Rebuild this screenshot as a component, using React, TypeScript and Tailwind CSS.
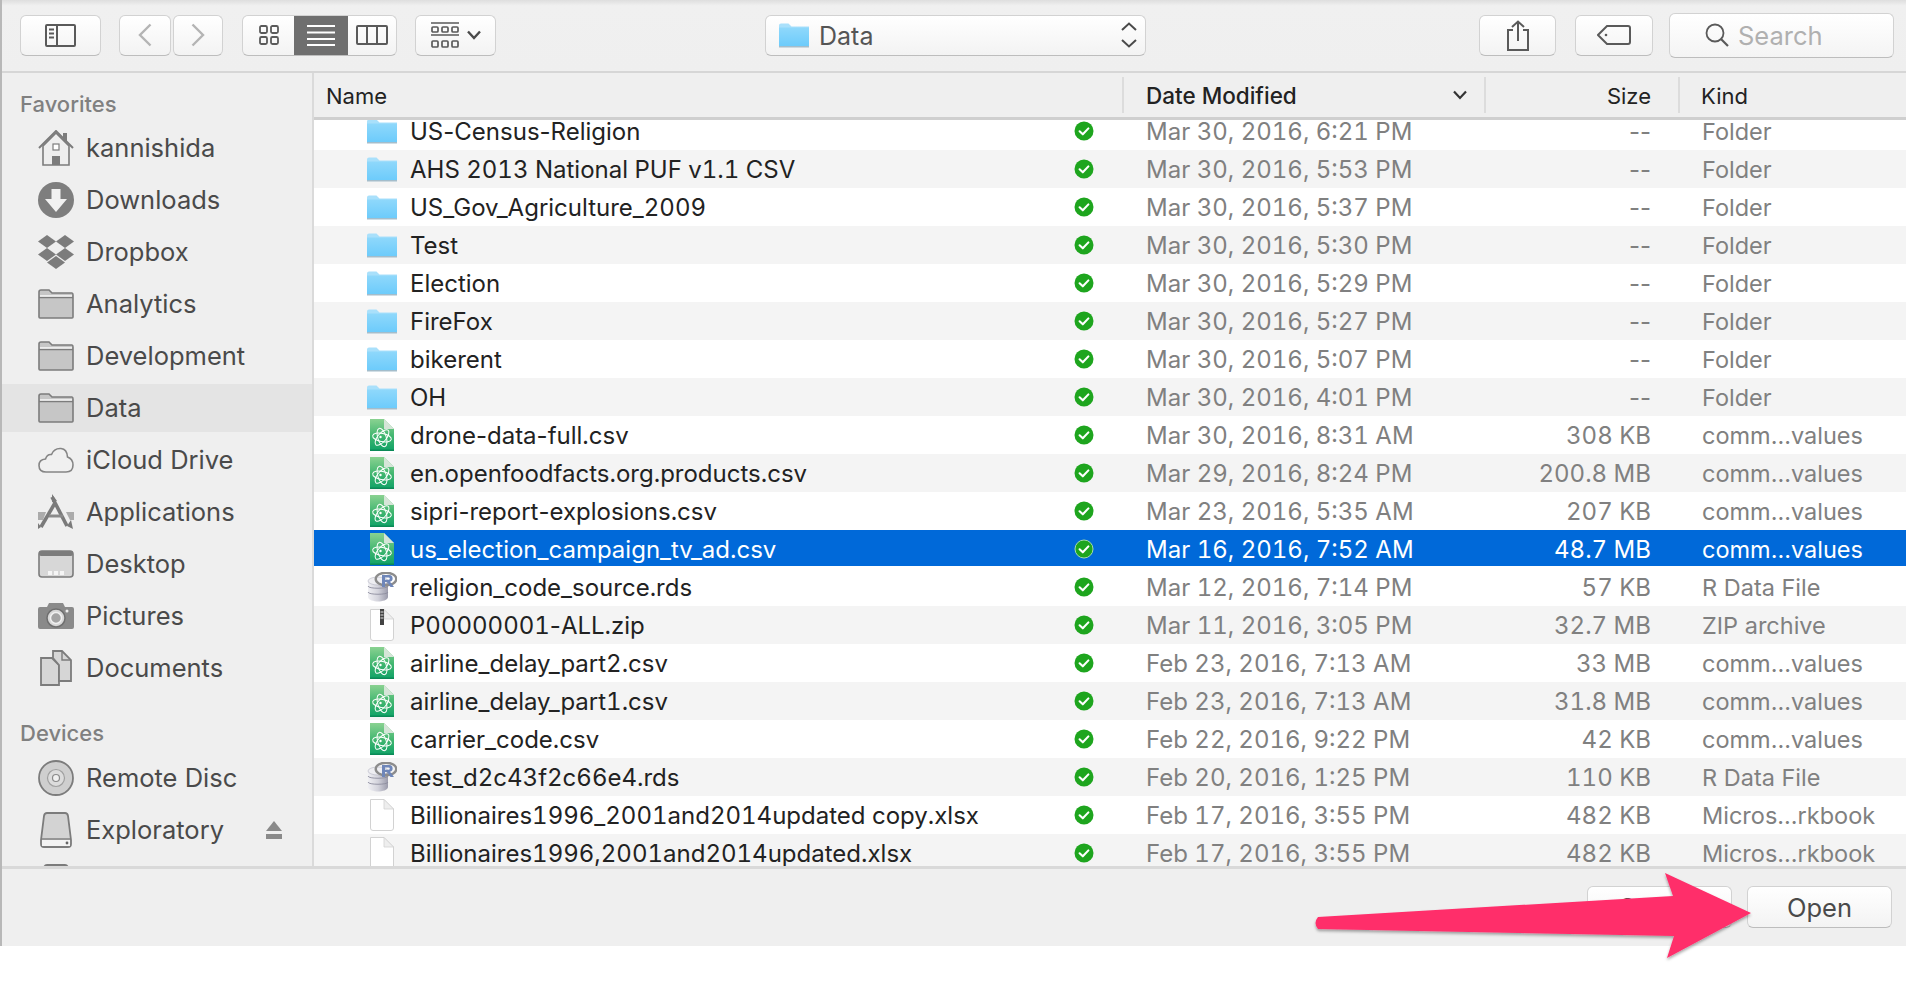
import React from "react";

type Row = { n: string; d: string; s: string; k: string; t: "folder" | "csv" | "rds" | "zip" | "blank" };

const rows: Row[] = [
  { n: "US-Census-Religion", d: "Mar 30, 2016, 6:21 PM", s: "--", k: "Folder", t: "folder" },
  { n: "AHS 2013 National PUF v1.1 CSV", d: "Mar 30, 2016, 5:53 PM", s: "--", k: "Folder", t: "folder" },
  { n: "US_Gov_Agriculture_2009", d: "Mar 30, 2016, 5:37 PM", s: "--", k: "Folder", t: "folder" },
  { n: "Test", d: "Mar 30, 2016, 5:30 PM", s: "--", k: "Folder", t: "folder" },
  { n: "Election", d: "Mar 30, 2016, 5:29 PM", s: "--", k: "Folder", t: "folder" },
  { n: "FireFox", d: "Mar 30, 2016, 5:27 PM", s: "--", k: "Folder", t: "folder" },
  { n: "bikerent", d: "Mar 30, 2016, 5:07 PM", s: "--", k: "Folder", t: "folder" },
  { n: "OH", d: "Mar 30, 2016, 4:01 PM", s: "--", k: "Folder", t: "folder" },
  { n: "drone-data-full.csv", d: "Mar 30, 2016, 8:31 AM", s: "308 KB", k: "comm...values", t: "csv" },
  { n: "en.openfoodfacts.org.products.csv", d: "Mar 29, 2016, 8:24 PM", s: "200.8 MB", k: "comm...values", t: "csv" },
  { n: "sipri-report-explosions.csv", d: "Mar 23, 2016, 5:35 AM", s: "207 KB", k: "comm...values", t: "csv" },
  { n: "us_election_campaign_tv_ad.csv", d: "Mar 16, 2016, 7:52 AM", s: "48.7 MB", k: "comm...values", t: "csv" },
  { n: "religion_code_source.rds", d: "Mar 12, 2016, 7:14 PM", s: "57 KB", k: "R Data File", t: "rds" },
  { n: "P00000001-ALL.zip", d: "Mar 11, 2016, 3:05 PM", s: "32.7 MB", k: "ZIP archive", t: "zip" },
  { n: "airline_delay_part2.csv", d: "Feb 23, 2016, 7:13 AM", s: "33 MB", k: "comm...values", t: "csv" },
  { n: "airline_delay_part1.csv", d: "Feb 23, 2016, 7:13 AM", s: "31.8 MB", k: "comm...values", t: "csv" },
  { n: "carrier_code.csv", d: "Feb 22, 2016, 9:22 PM", s: "42 KB", k: "comm...values", t: "csv" },
  { n: "test_d2c43f2c66e4.rds", d: "Feb 20, 2016, 1:25 PM", s: "110 KB", k: "R Data File", t: "rds" },
  { n: "Billionaires1996_2001and2014updated copy.xlsx", d: "Feb 17, 2016, 3:55 PM", s: "482 KB", k: "Micros...rkbook", t: "blank" },
  { n: "Billionaires1996,2001and2014updated.xlsx", d: "Feb 17, 2016, 3:55 PM", s: "482 KB", k: "Micros...rkbook", t: "blank" },
];

function BlueFolder({ w = 30, h = 25 }: { w?: number; h?: number }) {
  return (
    <svg width={w} height={h} viewBox="0 0 30 25">
      <defs>
        <linearGradient id="bf" x1="0" y1="0" x2="0" y2="1">
          <stop offset="0" stopColor="#8fd8fb" />
          <stop offset="1" stopColor="#6ccbfb" />
        </linearGradient>
      </defs>
      <path d="M0 2.5Q0 0.5 2 0.5H9.5L12.5 3.5H30V23H0Z" fill="#a9e0fb" />
      <rect x="0" y="4.5" width="30" height="19" fill="url(#bf)" />
      <rect x="0" y="23" width="30" height="1.5" fill="#a4bdcb" />
    </svg>
  );
}

function CsvIcon() {
  return (
    <svg width="24" height="32" viewBox="0 0 24 32">
      <defs>
        <linearGradient id="cg" x1="0" y1="0" x2="0" y2="1">
          <stop offset="0" stopColor="#8ad291" />
          <stop offset="0.55" stopColor="#3fb56f" />
          <stop offset="1" stopColor="#0fa267" />
        </linearGradient>
      </defs>
      <path d="M0 0H14L24 10V32H0Z" fill="url(#cg)" />
      <path d="M0 30.5H24V32H0Z" fill="#0b8a57" />
      <path d="M14 0L24 10H14Z" fill="#d6e5d8" />
      <g fill="none" stroke="#fff" strokeWidth="1" transform="translate(12 18.500)">
        <ellipse rx="9.500" ry="4.200" transform="rotate(12)" />
        <ellipse rx="9.500" ry="4.200" transform="rotate(72)" />
        <ellipse rx="9.500" ry="4.200" transform="rotate(-50)" />
      </g>
      <circle cx="10.500" cy="18" r="1.200" fill="#fff" />
    </svg>
  );
}

function RdsIcon() {
  return (
    <svg width="30" height="30" viewBox="0 0 30 30">
      <defs>
        <linearGradient id="rd" x1="0" y1="0" x2="1" y2="0">
          <stop offset="0" stopColor="#f0f0f4" />
          <stop offset="0.5" stopColor="#d3d3dc" />
          <stop offset="1" stopColor="#9b9bab" />
        </linearGradient>
      </defs>
      <path d="M1 9V25C1 28 7 29.5 11 29.5S21 28 21 25V9Z" fill="url(#rd)" />
      <ellipse cx="11" cy="9" rx="10" ry="4" fill="#eeeef2" stroke="#b5b5c2" strokeWidth="0.6" />
      <path d="M1 14C1 17 21 17 21 14M1 20C1 23 21 23 21 20" fill="none" stroke="#8d8d9e" strokeWidth="0.9" />
      <ellipse cx="19" cy="7" rx="10.3" ry="6.3" fill="none" stroke="#8c8c8c" strokeWidth="2.4" />
      <path d="M15 15V3H22.5A3.4 3.4 0 0 1 23 9.7L27 15H23.5L20 10H18V15ZM18 5.4V7.8H21.6A1.2 1.2 0 0 0 21.6 5.4Z" fill="#6e86b9" />
    </svg>
  );
}

function DocIcon({ zip }: { zip?: boolean }) {
  return (
    <svg width="24" height="32" viewBox="0 0 24 32">
      <path d="M0.5 0.5H14L23.5 10V29Q23.5 31.5 21 31.5H3Q0.5 31.5 0.5 29Z" fill="#fff" stroke="#d2d2d2" />
      <path d="M14 0.5L23.5 10H14Z" fill="#eeeeee" stroke="#d2d2d2" strokeWidth="0.8" />
      {zip && <rect x="10" y="0" width="4" height="16" fill="#444" />}
      {zip && <path d="M10.5 3H13.5M10.5 6H13.5M10.5 9H13.5" stroke="#ddd" strokeWidth="1" />}
    </svg>
  );
}

function Check({ sel }: { sel: boolean }) {
  return (
    <svg width="20" height="20" viewBox="0 0 20 20">
      <circle cx="10" cy="10" r={sel ? 9 : 9.5} fill="#1ea51e" stroke={sel ? "#a5dca5" : "none"} strokeWidth={sel ? 1 : 0} />
      <path d="M5.6 10.3L8.8 13.3L14.4 7.4" fill="none" stroke="#fff" strokeWidth="2.1" strokeLinecap="round" strokeLinejoin="round" />
    </svg>
  );
}

function GrayFolder() {
  return (
    <svg width="36" height="30" viewBox="0 0 36 30">
      <path d="M1 28V3Q1 1 3 1H11L14 4H34Q35 4 35 6V28Q35 29 34 29H2Q1 29 1 28Z" fill="#c6c6c6" stroke="#7c7c7c" strokeWidth="1.6" />
      <path d="M1 8.5H35" stroke="#7c7c7c" strokeWidth="1.6" />
      <path d="M2 6H34V7.8H2Z" fill="#ececec" />
    </svg>
  );
}

const sideIcons: Record<string, React.ReactNode> = {
  home: (
    <svg width="36" height="36" viewBox="0 0 36 36">
      <path d="M1 18L18 1L35 18" fill="none" stroke="#7c7c7c" strokeWidth="2" />
      <path d="M5 16L18 3L31 16V35H5Z" fill="#eeeeee" stroke="#7c7c7c" strokeWidth="1.6" />
      <rect x="15" y="14" width="6" height="6" fill="#fff" stroke="#7c7c7c" strokeWidth="1.2" />
      <rect x="14" y="26" width="8" height="9" fill="#7c7c7c" />
      <rect x="25" y="3" width="4" height="8" fill="#7c7c7c" />
    </svg>
  ),
  down: (
    <svg width="36" height="36" viewBox="0 0 36 36">
      <circle cx="18" cy="18" r="18" fill="#7e7e7e" />
      <path d="M13.5 7H22.5V17H29L18 30L7 17H13.5Z" fill="#f1f1f1" />
    </svg>
  ),
  dropbox: (
    <svg width="36" height="36" viewBox="0 0 36 36">
      <g fill="#7c7c7c">
        <path d="M9 1L18 7.5L9 14L0 7.5Z" />
        <path d="M27 1L36 7.5L27 14L18 7.5Z" />
        <path d="M9 14L18 20.5L9 27L0 20.5Z" />
        <path d="M27 14L36 20.5L27 27L18 20.5Z" />
        <path d="M18 22L27 28.5L18 35L9 28.5Z" />
      </g>
    </svg>
  ),
  folder: <GrayFolder />,
  cloud: (
    <svg width="36" height="26" viewBox="0 0 36 26">
      <path d="M8 25Q1 25 1 18.5Q1 12.5 7.5 12Q9 7 13.5 7.5Q16 1 23 1.5Q29 2 29.5 10Q35 12 35 18Q35 25 28 25Z" fill="#f0f0f0" stroke="#858585" strokeWidth="1.6" />
    </svg>
  ),
  apps: (
    <svg width="36" height="36" viewBox="0 0 36 36">
      <path d="M0 18H8L5 26H0ZM28 18H36V26H32Z" fill="#ababab" />
      <path d="M14 3L29 32" stroke="#7a7a7a" strokeWidth="3.6" />
      <path d="M17 9L3 33" stroke="#7a7a7a" strokeWidth="3.6" />
      <path d="M11 22H25" stroke="#8a8a8a" strokeWidth="3" />
      <path d="M29 32L35 35L33 26Z" fill="#7a7a7a" />
      <path d="M3 33L0 35V29Z" fill="#7a7a7a" />
      <path d="M14 0L19 7L14 8Z" fill="#7a7a7a" />
    </svg>
  ),
  desktop: (
    <svg width="36" height="28" viewBox="0 0 36 28">
      <rect x="1" y="1" width="34" height="26" rx="3" fill="#d7d7d7" stroke="#7c7c7c" strokeWidth="1.6" />
      <rect x="1" y="1" width="34" height="5" rx="2" fill="#7c7c7c" />
      <rect x="10" y="21" width="4" height="4" fill="#f5f5f5" />
      <rect x="16" y="21" width="4" height="4" fill="#f5f5f5" />
      <rect x="22" y="21" width="4" height="4" fill="#f5f5f5" />
    </svg>
  ),
  camera: (
    <svg width="36" height="26" viewBox="0 0 36 26">
      <path d="M0 6Q0 4 2 4H9L11 0H25L27 4H34Q36 4 36 6V24Q36 26 34 26H2Q0 26 0 24Z" fill="#8a8a8a" />
      <circle cx="18" cy="15" r="9" fill="#d8d8d8" stroke="#6f6f6f" strokeWidth="1.5" />
      <circle cx="18" cy="15" r="5.5" fill="#a4a4a4" stroke="#f0f0f0" strokeWidth="1.5" />
      <circle cx="29" cy="8" r="1.5" fill="#eee" />
    </svg>
  ),
  docs: (
    <svg width="32" height="36" viewBox="0 0 32 36">
      <path d="M1 8H12L19 15V35H1Z" fill="#d6d6d6" stroke="#7c7c7c" strokeWidth="1.8" />
      <path d="M13 1H22L31 10V31H19V15L13 8Z" fill="#d6d6d6" stroke="#7c7c7c" strokeWidth="1.8" />
      <path d="M22 1V10H31" fill="none" stroke="#7c7c7c" strokeWidth="1.4" />
    </svg>
  ),
  disc: (
    <svg width="36" height="36" viewBox="0 0 36 36">
      <circle cx="18" cy="18" r="17" fill="#cfcfcf" stroke="#7c7c7c" strokeWidth="1.8" />
      <circle cx="18" cy="18" r="8.5" fill="#dcdcdc" stroke="#a0a0a0" strokeWidth="1.2" />
      <circle cx="18" cy="18" r="3.5" fill="#f0f0f0" stroke="#8a8a8a" strokeWidth="1.2" />
    </svg>
  ),
  hdd: (
    <svg width="32" height="36" viewBox="0 0 32 36">
      <path d="M4 4Q4.5 1 7 1H25Q27.500 1 28 4L31 28V32Q31 35 28 35H4Q1 35 1 32V28Z" fill="#d3d3d3" stroke="#7c7c7c" strokeWidth="1.8" />
      <path d="M1 27H31" stroke="#7c7c7c" strokeWidth="1.4" />
      <rect x="2" y="28" width="28" height="6" fill="#f3f3f3" />
      <circle cx="27" cy="31" r="1.4" fill="#666" />
    </svg>
  ),
};

const favorites: [string, string, boolean?][] = [
  ["home", "kannishida"],
  ["down", "Downloads"],
  ["dropbox", "Dropbox"],
  ["folder", "Analytics"],
  ["folder", "Development"],
  ["folder", "Data", true],
  ["cloud", "iCloud Drive"],
  ["apps", "Applications"],
  ["desktop", "Desktop"],
  ["camera", "Pictures"],
  ["docs", "Documents"],
];

function SideItem({ icon, label, active, eject }: { icon: string; label: string; active?: boolean; eject?: boolean }) {
  return (
    <div className={`flex shrink-0 items-center pl-[36px] ${active ? "my-[2px] h-[48px] bg-[#e4e4e4]" : "h-[52px]"}`}>
      <div className="flex w-[36px] shrink-0 items-center justify-center">{sideIcons[icon]}</div>
      <span className="ml-[12px] text-[25.500px] text-[#4a4a4a]">{label}</span>
      {eject && (
        <svg className="ml-auto mr-[30px]" width="16" height="18" viewBox="0 0 16 18">
          <path d="M8 0L16 10H0Z" fill="#8a8a8a" />
          <rect y="13" width="16" height="5" fill="#8a8a8a" />
        </svg>
      )}
    </div>
  );
}

const btn = "flex h-[41px] items-center justify-center rounded-[6px] border border-[#d2d2d2] border-b-[#bdbdbd] bg-gradient-to-b from-white to-[#f3f3f3]";

function Toolbar() {
  const ink = "#5a5a5a";
  return (
    <div className="relative flex h-[73px] shrink-0 items-center border-b-[2px] border-[#d6d6d6] bg-gradient-to-b from-[#dedede] from-0% via-[#f0f0f0] via-[8%] to-[#efefef] pl-[18px] pb-[1px]">
      <div className={`${btn} w-[81px]`}>
        <svg width="31" height="23" viewBox="0 0 31 23" fill="none" stroke={ink} strokeWidth="2">
          <rect x="1" y="1" width="29" height="21" rx="1" />
          <path d="M12 1V22" />
          <path d="M4 5.500H9M4 9.500H9M4 13.500H9" strokeWidth="1.8" />
        </svg>
      </div>
      <div className="ml-[18px] flex gap-[2px]">
        <div className={`${btn} w-[52px]`}>
          <svg width="14" height="24" viewBox="0 0 14 24" fill="none" stroke="#b4b4b4" strokeWidth="2.4">
            <path d="M12.500 1.500L2 12L12.500 22.500" />
          </svg>
        </div>
        <div className={`${btn} w-[50px]`}>
          <svg width="14" height="24" viewBox="0 0 14 24" fill="none" stroke="#b4b4b4" strokeWidth="2.4">
            <path d="M1.500 1.500L12 12L1.500 22.500" />
          </svg>
        </div>
      </div>
      <div className={`${btn} ml-[19px] w-[155px] overflow-hidden !justify-start`}>
        <div className="flex h-full w-[51px] items-center justify-center">
          <svg width="20" height="20" viewBox="0 0 20 20" fill="none" stroke={ink} strokeWidth="1.8">
            <rect x="1" y="1" width="7" height="7" rx="1.500" />
            <rect x="12" y="1" width="7" height="7" rx="1.500" />
            <rect x="1" y="12" width="7" height="7" rx="1.500" />
            <rect x="12" y="12" width="7" height="7" rx="1.500" />
          </svg>
        </div>
        <div className="flex h-full w-[54px] items-center justify-center bg-[#6f6f6f]">
          <svg width="28" height="21" viewBox="0 0 28 21" stroke="#fff" strokeWidth="2">
            <path d="M0 1H28M0 7.500H28M0 14H28M0 20H28" />
          </svg>
        </div>
        <div className="flex h-full flex-1 items-center justify-center">
          <svg width="32" height="20" viewBox="0 0 32 20" fill="none" stroke={ink} strokeWidth="2">
            <rect x="1" y="1" width="30" height="18" rx="1" />
            <path d="M11 1V19M21 1V19" />
          </svg>
        </div>
      </div>
      <div className={`${btn} ml-[18px] w-[81px] gap-[8px]`}>
        <svg width="28" height="26" viewBox="0 0 28 26" fill="none" stroke={ink} strokeWidth="1.7">
          <path d="M0 1H28M0 13H28" />
          <rect x="1" y="5" width="6" height="5" rx="1" />
          <rect x="11" y="5" width="6" height="5" rx="1" />
          <rect x="21" y="5" width="6" height="5" rx="1" />
          <rect x="1" y="19" width="6" height="6" rx="1" />
          <rect x="11" y="19" width="6" height="6" rx="1" />
          <rect x="21" y="19" width="6" height="6" rx="1" />
        </svg>
        <svg width="14" height="10" viewBox="0 0 14 10" fill="none" stroke="#4a4a4a" strokeWidth="2.400">
          <path d="M1 1.500L7 8L13 1.500" />
        </svg>
      </div>
      <div className={`${btn} ml-[269px] w-[381px] !justify-start pl-[13px]`}>
        <BlueFolder />
        <span className="ml-[10px] pt-[2px] text-[25px] text-[#555]">Data</span>
        <svg className="ml-auto mr-[8px]" width="16" height="26" viewBox="0 0 16 26" fill="none" stroke="#4a4a4a" strokeWidth="2">
          <path d="M1 8L8 1.500L15 8M1 18L8 24.500L15 18" />
        </svg>
      </div>
      <div className={`${btn} ml-[333px] w-[77px]`}>
        <svg width="22" height="31" viewBox="0 0 22 31" fill="none" stroke={ink} strokeWidth="2">
          <path d="M6 10H1V30H21V10H16" />
          <path d="M11 21V2M5 7L11 1.500L17 7" />
        </svg>
      </div>
      <div className={`${btn} ml-[19px] w-[78px]`}>
        <svg width="34" height="20" viewBox="0 0 34 20" fill="none" stroke={ink} strokeWidth="2">
          <path d="M10 1H31Q33 1 33 3V17Q33 19 31 19H10L1 10Z" />
          <circle cx="9" cy="10" r="1.300" fill={ink} stroke="none" />
        </svg>
      </div>
      <div className="ml-[16px] flex h-[45px] w-[225px] items-center rounded-[6px] border border-[#d2d2d2] border-b-[#bdbdbd] bg-gradient-to-b from-white to-[#f4f4f4] pl-[35px]">
        <svg width="24" height="24" viewBox="0 0 24 24" fill="none" stroke={ink} strokeWidth="1.800">
          <circle cx="10" cy="10" r="8.500" />
          <path d="M16 16L23 23" strokeWidth="2.200" />
        </svg>
        <span className="ml-[9px] pt-[2px] text-[25.500px] text-[#b0b0b0]">Search</span>
      </div>
    </div>
  );
}

function Sidebar() {
  return (
    <div className="flex h-full w-[312px] shrink-0 flex-col overflow-hidden border-r-[2px] border-[#dadada] bg-[#efefef] pt-[16px]">
      <div className="h-[33px] shrink-0 pl-[18px] text-[22px] leading-[30px] font-medium text-[#808080]">Favorites</div>
      {favorites.map(([i, l, a]) => (
        <SideItem key={l} icon={i} label={l} active={a} />
      ))}
      <div className="mt-[24px] h-[30px] shrink-0 pl-[18px] text-[22px] leading-[30px] font-medium text-[#808080]">Devices</div>
      <div className="mt-[4px] flex flex-col">
        <SideItem icon="disc" label="Remote Disc" />
        <SideItem icon="hdd" label="Exploratory" eject />
        <SideItem icon="hdd" label="" />
      </div>
    </div>
  );
}

function Plain({ text }: { text: string }) {
  const parts = text.split("-");
  return (
    <>
      {parts.map((p, i) => (
        <React.Fragment key={i}>
          {i > 0 && <span className="[font-variant-numeric:normal]">-</span>}
          {p}
        </React.Fragment>
      ))}
    </>
  );
}

function FileRow({ r, i }: { r: Row; i: number }) {
  const sel = i === 11;
  const bg = sel ? "bg-[#0069d9] shadow-[inset_0_-2px_0_#ffffff]" : i % 2 === 0 ? "bg-white" : "bg-[#f4f4f4]";
  const grey = sel ? "text-white" : "text-[#808080]";
  const cell = "pt-[2px] text-[24px] leading-[20px] tabular-nums";
  return (
    <div className={`flex h-[38px] shrink-0 items-center whitespace-nowrap ${bg}`}>
      <div className="flex w-[83px] shrink-0 justify-center pl-[53px] [&>*]:shrink-0">
        {r.t === "folder" && <BlueFolder />}
        {r.t === "csv" && <CsvIcon />}
        {r.t === "rds" && <RdsIcon />}
        {r.t === "zip" && <DocIcon zip />}
        {r.t === "blank" && <DocIcon />}
      </div>
      <div className={`ml-[13px] w-[664px] shrink-0 ${cell} ${sel ? "text-white" : "text-[#222]"}`}><Plain text={r.n} /></div>
      <div className="flex w-[20px] shrink-0 items-center"><Check sel={sel} /></div>
      <div className={`ml-[52px] w-[300px] shrink-0 ${cell} ${grey}`}>{r.d}</div>
      <div className={`w-[205px] shrink-0 text-right ${cell} ${grey}`}><Plain text={r.s} /></div>
      <div className={`ml-[51px] pt-[2px] text-[23.500px] leading-[20px] ${grey}`}>{r.k}</div>
    </div>
  );
}

function Header() {
  const div = "h-[36px] w-[2px] bg-[#dcdcdc]";
  return (
    <div className="relative z-10 flex h-[47px] shrink-0 items-center border-b-[3px] border-[#cfcfcf] bg-[#efefef] pl-[12px] text-[22px] text-[#222]">
      <span className="w-[796px] shrink-0 pt-[2px] font-normal">Name</span>
      <div className={div} />
      <span className="ml-[22px] w-[307px] shrink-0 pt-[2px] text-[22.500px] font-medium">Date Modified</span>
      <svg width="14" height="10" viewBox="0 0 14 10" fill="none" stroke="#333" strokeWidth="2.200">
        <path d="M1 1.500L7 8L13 1.500" />
      </svg>
      <div className={`${div} ml-[17px]`} />
      <span className="w-[165px] shrink-0 pt-[2px] text-right">Size</span>
      <div className={`${div} ml-[27px]`} />
      <span className="ml-[21px] pt-[2px]">Kind</span>
    </div>
  );
}

function Arrow() {
  return (
    <svg className="absolute left-[1300px] top-[860px]" width="470" height="110" viewBox="1300 860 470 110">
      <defs>
        <filter id="as" x="-5%" y="-20%" width="110%" height="140%">
          <feDropShadow dx="0" dy="2" stdDeviation="1.500" floodColor="#000" floodOpacity="0.35" />
        </filter>
      </defs>
      <path
        d="M1318 917L1673 896L1665 873L1751 913L1667 958L1674 936L1318 929Q1313 923 1318 917Z"
        fill="#ff2d6b"
        filter="url(#as)"
      />
    </svg>
  );
}

export default function App() {
  return (
    <div
      className="relative h-[1000px] w-[1906px] overflow-hidden bg-white text-[23px] leading-none"
      style={{ fontFamily: 'Inter, "Liberation Sans", sans-serif' }}
    >
      <div className="flex h-[946px] flex-col border-l-[2px] border-[#b8b8b8] bg-[#efefef]">
        <Toolbar />
        <div className="flex h-[793px] shrink-0">
          <Sidebar />
          <div className="flex min-w-0 flex-1 flex-col overflow-hidden">
            <Header />
            <div className="-mt-[8px] flex flex-col">
              {rows.map((r, i) => (
                <FileRow key={r.n} r={r} i={i} />
              ))}
            </div>
          </div>
        </div>
        <div className="flex h-[80px] flex-1 items-center justify-end gap-[15px] border-t-[3px] border-[#d9d9d9] pr-[14px] pb-[2px]">
          <div className={`${btn} h-[42px] w-[145px] pt-[2px] text-[25.500px] text-[#4a4a4a]`}>Cancel</div>
          <div className={`${btn} h-[42px] w-[145px] pt-[2px] text-[25.500px] text-[#4a4a4a]`}>Open</div>
        </div>
      </div>
      <Arrow />
    </div>
  );
}
